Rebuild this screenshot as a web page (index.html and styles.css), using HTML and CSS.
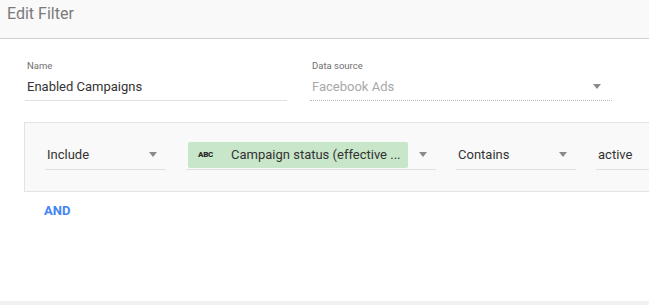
FILE: index.html
```html
<!DOCTYPE html>
<html lang="en">
<head>
<meta charset="utf-8">
<title>Edit Filter</title>
<link rel="stylesheet" href="styles.css">
</head>
<body>
<div class="page">
  <div class="head">Edit Filter</div>

  <div class="main">
    <div class="fields">
      <div class="field name">
        <span class="lbl">Name</span>
        <div class="val">Enabled Campaigns</div>
      </div>
      <div class="field src">
        <span class="lbl">Data source</span>
        <div class="val dis">Facebook Ads <i class="arr"></i></div>
      </div>
    </div>

    <div class="box">
      <div class="sel w1">Include <i class="arr"></i></div>
      <div class="sel w2">
        <span class="chip"><span class="ico">ABC</span>Campaign status (effective ...</span>
        <i class="arr"></i>
      </div>
      <div class="sel w3">Contains <i class="arr"></i></div>
      <div class="sel w4">active</div>
    </div>

    <a class="and">AND</a>
  </div>

  <div class="foot"></div>
</div>
</body>
</html>
```

FILE: styles.css
```css
*{box-sizing:border-box;}
html,body{margin:0;background:#fff;overflow:hidden;}
body{ font-family:Roboto,"Liberation Sans",Arial,sans-serif; color:#333; }
.page{ display:flex; flex-direction:column; height:305px; overflow:hidden; }

.head{ height:39px; background:#f9f9f9; border-bottom:1px solid #cfcfcf; padding:4px 0 0 7px; font-size:16px; line-height:20px; color:#7a7a7a; }

.main{ padding-left:24px; overflow:hidden; }

/* name + data source */
.fields{ display:flex; gap:23px; margin-top:21px; padding-left:1px; }
.field .lbl{ display:block; font-size:9.5px; line-height:12px; color:#6f6f6f; padding-left:2px; }
.field .val{ display:flex; align-items:center; font-size:13px; height:29px; padding:1px 2px 0; border-bottom:1px solid #e0e0e0; }
.field.name{ width:262px; }
.field.src{ width:302px; }
.field .val.dis{ color:#a8a8a8; border-bottom:1px dotted #b8b8b8; padding-right:11px; }

.arr{ margin-left:auto; width:0; height:0; border-left:4.5px solid transparent; border-right:4.5px solid transparent; border-top:5px solid #8a8a8a; }

/* filter row: runs on past the right edge */
.box{ display:flex; align-items:flex-end; gap:20px; height:70px; margin:21px -80px 0 0; padding:0 0 21px 20px; background:#f9f9f9; border:1px solid #e3e3e3; }
.sel{ display:flex; align-items:center; flex:none; height:28px; padding:0 9px 2px 2px; font-size:13px; border-bottom:1px solid #e0e0e0; }
.w1{ width:121px; }
.w2{ width:250px; }
.w3{ width:120px; }
.w4{ width:120px; }

.chip{ display:flex; align-items:center; width:220px; height:26px; margin-right:11px; background:#c8e6c9; border-radius:2px; white-space:nowrap; overflow:hidden; }
.chip .ico{ width:43px; padding-left:10px; font-size:8px; font-weight:900; letter-spacing:-.3px; color:#2a2a2a; }

.and{ display:inline-block; margin:11px 0 0 20px; font-size:13px; font-weight:700; color:#4285f4; cursor:pointer; }

.foot{ margin-top:auto; height:4px; background:#f1f1f1; }
```
